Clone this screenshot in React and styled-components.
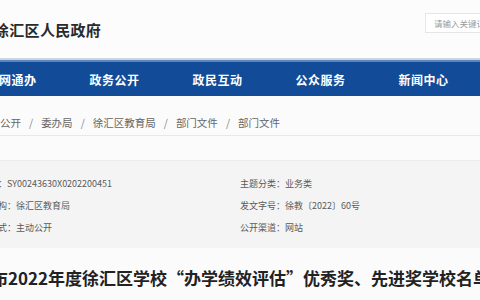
import React from "react";
import styled, { createGlobalStyle } from "styled-components";

const Global = createGlobalStyle`
  html, body { margin: 0; padding: 0; background: #fbfbfb; }
  body { font-family: "Noto Sans CJK SC", "Liberation Sans", sans-serif; overflow: hidden; }
`;

const Page = styled.div`
  width: 480px;
  height: 300px;
  overflow: hidden;
  background: #fbfbfb;
`;

const Header = styled.header`
  height: 58px;
  display: flex;
  align-items: center;
  justify-content: space-between;
  border-bottom: 2px solid #cdd4dd;
  background: #fcfcfc;
`;

const SiteTitle = styled.h1`
  margin: 0 0 0 -6px;
  font-size: 15px;
  font-weight: 700;
  color: #2a2a2a;
  letter-spacing: 0.3px;
`;

const Search = styled.div`
  width: 70px;
  height: 20px;
  margin-right: -15px;
  margin-top: -12px;
  box-sizing: border-box;
  border: 1px solid #e6e6e6;
  background: #fff;
  display: flex;
  align-items: center;
  padding-left: 8px;
  font-size: 8.5px;
  color: #9a9a9a;
  white-space: nowrap;
  overflow: hidden;
`;

const Nav = styled.nav`
  height: 36px;
  background: #124c98;
  border-top: 2px solid #5d86bd;
  box-sizing: border-box;
  display: flex;
  align-items: center;
  margin-left: -40px;
`;

const NavItem = styled.div`
  flex: 0 0 103px;
  text-align: center;
  color: #fff;
  font-size: 12px;
  font-weight: 700;
  letter-spacing: 0.5px;
`;

const Crumbs = styled.div`
  display: flex;
  align-items: center;
  gap: 6px;
  height: 25px;
  margin-top: 14px;
  border-bottom: 1px solid #e8e8e8;
  font-size: 10.5px;
  color: #666;
  white-space: nowrap;
`;

const Sep = styled.span`
  color: #888;
  padding: 0 2px;
`;

const InfoBox = styled.div`
  margin-top: 24px;
  background: #f4f4f4;
  border-top: 1px solid #ececec;
  padding: 11px 0 10px;
  display: grid;
  grid-template-columns: 240px 240px;
  grid-auto-rows: 22px;
  margin-left: -40px;
  padding-left: 40px;
`;

const Cell = styled.div`
  font-size: 9px;
  color: #5a5a5a;
  display: flex;
  align-items: center;
  white-space: nowrap;
  margin-left: ${(p) => (p.$left ? "-29px" : "0")};
`;

const Title = styled.h2`
  margin: 17px 0 0 -60px;
  font-size: 17px;
  font-weight: 700;
  color: #222;
  white-space: nowrap;
  letter-spacing: 0;
`;

const navItems = ["一网通办", "政务公开", "政民互动", "公众服务", "新闻中心", "魅力徐汇"];
const crumbs = ["公开", "委办局", "徐汇区教育局", "部门文件", "部门文件"];

export default function App() {
  return (
    <Page>
      <Global />
      <Header>
        <SiteTitle>徐汇区人民政府</SiteTitle>
        <Search>请输入关键词</Search>
      </Header>
      <Nav>
        {navItems.map((n) => (
          <NavItem key={n}>{n}</NavItem>
        ))}
      </Nav>
      <Crumbs>
        {crumbs.map((c, i) => (
          <React.Fragment key={i}>
            {i > 0 && <Sep>/</Sep>}
            <span>{c}</span>
          </React.Fragment>
        ))}
      </Crumbs>
      <InfoBox>
        <Cell $left>索取号：SY00243630X0202200451</Cell>
        <Cell>主题分类：业务类</Cell>
        <Cell $left>发布机构：徐汇区教育局</Cell>
        <Cell>发文字号：徐教〔2022〕60号</Cell>
        <Cell $left>公开方式：主动公开</Cell>
        <Cell>公开渠道：网站</Cell>
      </InfoBox>
      <Title>关于公布2022年度徐汇区学校“办学绩效评估”优秀奖、先进奖学校名单</Title>
    </Page>
  );
}
